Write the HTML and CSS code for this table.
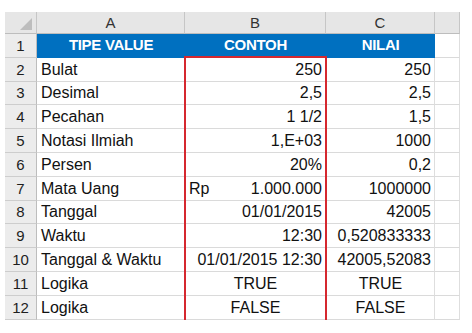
FILE: index.html
```html
<!DOCTYPE html>
<html>
<head>
<meta charset="utf-8">
<link rel="stylesheet" href="styles.css">
</head>
<body>
<div class="sheet">
  <div class="grid">
    <div class="corner"><svg width="14" height="14" viewBox="0 0 14 14"><polygon points="13,1 13,13 1,13" fill="#bdbdbd"/></svg></div>
    <div class="ch">A</div><div class="ch">B</div><div class="ch">C</div><div class="ch"></div>

    <div class="rh">1</div><div class="c hd">TIPE VALUE</div><div class="c hd">CONTOH</div><div class="c hd">NILAI</div><div class="c"></div>

    <div class="rh">2</div><div class="c">Bulat</div><div class="c r">250</div><div class="c r">250</div><div class="c"></div>
    <div class="rh">3</div><div class="c">Desimal</div><div class="c r">2,5</div><div class="c r">2,5</div><div class="c"></div>
    <div class="rh">4</div><div class="c">Pecahan</div><div class="c r">1 1/2</div><div class="c r">1,5</div><div class="c"></div>
    <div class="rh">5</div><div class="c">Notasi Ilmiah</div><div class="c r">1,E+03</div><div class="c r">1000</div><div class="c"></div>
    <div class="rh">6</div><div class="c">Persen</div><div class="c r">20%</div><div class="c r">0,2</div><div class="c"></div>
    <div class="rh">7</div><div class="c">Mata Uang</div><div class="c sb"><span>Rp</span><span>1.000.000</span></div><div class="c r">1000000</div><div class="c"></div>
    <div class="rh">8</div><div class="c">Tanggal</div><div class="c r">01/01/2015</div><div class="c r">42005</div><div class="c"></div>
    <div class="rh">9</div><div class="c">Waktu</div><div class="c r">12:30</div><div class="c r">0,520833333</div><div class="c"></div>
    <div class="rh">10</div><div class="c">Tanggal &amp; Waktu</div><div class="c r">01/01/2015 12:30</div><div class="c r">42005,52083</div><div class="c"></div>
    <div class="rh">11</div><div class="c">Logika</div><div class="c m">TRUE</div><div class="c m">TRUE</div><div class="c"></div>
    <div class="rh">12</div><div class="c">Logika</div><div class="c m">FALSE</div><div class="c m">FALSE</div><div class="c"></div>
  </div>
  <div class="sel"></div>
</div>
</body>
</html>
```
FILE: styles.css
```css
html, body {
  margin: 0;
  padding: 0;
  background: #ffffff;
}
body {
  font-family: "Liberation Sans", Arial, sans-serif;
  color: #111111;
}
.sheet {
  position: relative;
  margin: 12px 0 0 5px;
  width: 455px;
}
.grid {
  display: grid;
  grid-template-columns: 32px 148px 141px 109px 25px;
  grid-template-rows: 22px repeat(12, 23.8px);
}
.grid > div {
  box-sizing: border-box;
  overflow: hidden;
  white-space: nowrap;
}
.corner {
  background: #e6e6e6;
  border-right: 1px solid #c6c6c6;
  border-bottom: 1px solid #bdbdbd;
  display: flex;
  align-items: flex-end;
  justify-content: flex-end;
  padding: 0 3px 2px 0;
}
.ch {
  background: #e6e6e6;
  border-right: 1px solid #c6c6c6;
  border-bottom: 1px solid #bdbdbd;
  font-size: 15px;
  color: #333333;
  display: flex;
  align-items: flex-end;
  justify-content: center;
  padding-bottom: 2px;
  line-height: 17px;
}
.rh {
  background: #ececec;
  border-right: 1px solid #bdbdbd;
  border-bottom: 1px solid #cdcdcd;
  font-size: 15px;
  color: #1e1e1e;
  display: flex;
  align-items: flex-end;
  justify-content: center;
  line-height: 17px;
  padding-bottom: 3px;
}
.c {
  border-right: 1px solid #dedede;
  border-bottom: 1px solid #dadada;
  font-size: 16px;
  line-height: 18px;
  display: flex;
  align-items: flex-end;
  padding: 0 3px 2px 4px;
}
.c.hd {
  background: #0070c0;
  border-right-color: #0070c0;
  border-bottom-color: #0070c0;
  color: #ffffff;
  font-weight: bold;
  font-size: 15px;
  letter-spacing: -0.3px;
  justify-content: center;
  padding-bottom: 3px;
}
.c.r {
  justify-content: flex-end;
}
.c.m {
  justify-content: center;
}
.c.sb {
  justify-content: space-between;
}
.sel {
  position: absolute;
  left: 179px;
  top: 44px;
  width: 143px;
  height: 266px;
  box-sizing: border-box;
  border: 2px solid #d5282f;
}
```
